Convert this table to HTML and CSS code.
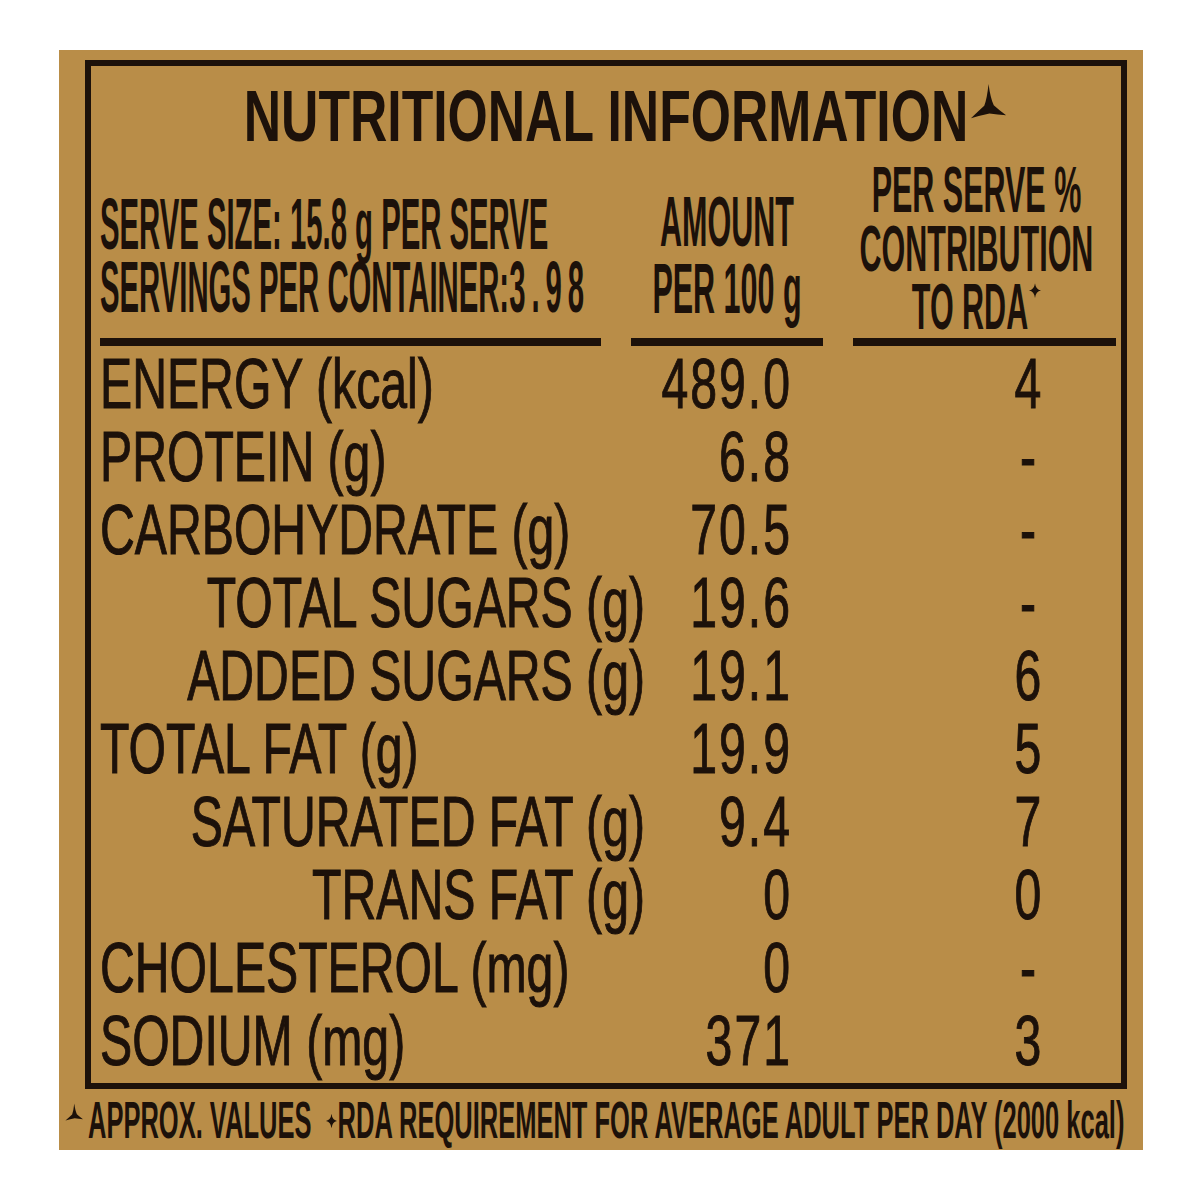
FILE: index.html
```html
<!DOCTYPE html>
<html lang="en">
<head>
<meta charset="utf-8">
<title>Nutritional Information</title>
<link rel="stylesheet" href="styles.css">
</head>
<body>
<div class="label">
  <div class="panel">
    <div class="title">
      <span class="title-text">NUTRITIONAL INFORMATION</span>
      <svg class="tristar" viewBox="0 0 40 40" aria-hidden="true"><path d="M19.5 1 Q21.5 16 25 23.5 Q31 29 38 34 Q29 33 20.5 32 Q11 34 1 37 Q9 29.5 15 24 Q18 16 19.5 1 Z"/></svg>
    </div>
    <div class="head">
      <div class="hcell c1"><div class="htext">SERVE SIZE: 15.8 g PER SERVE<br>SERVINGS PER CONTAINER:<span class="spaced">3.98</span></div></div>
      <div class="hcell c2"><div class="htext">AMOUNT<br>PER 100 g</div></div>
      <div class="hcell c3"><div class="htext">PER SERVE %<br>CONTRIBUTION<br>TO RDA<svg class="star" viewBox="0 0 12 12" preserveAspectRatio="none" aria-hidden="true"><path d="M6 0 Q6.8 5.2 12 6 Q6.8 6.8 6 12 Q5.2 6.8 0 6 Q5.2 5.2 6 0 Z"/></svg></div></div>
    </div>
    <div class="rows">
      <div class="row"><span class="name">ENERGY (kcal)</span><span class="val">489.0</span><span class="rda">4</span></div>
      <div class="row"><span class="name">PROTEIN (g)</span><span class="val">6.8</span><span class="rda">-</span></div>
      <div class="row"><span class="name">CARBOHYDRATE (g)</span><span class="val">70.5</span><span class="rda">-</span></div>
      <div class="row"><span class="name sub">TOTAL SUGARS (g)</span><span class="val">19.6</span><span class="rda">-</span></div>
      <div class="row"><span class="name sub">ADDED SUGARS (g)</span><span class="val">19.1</span><span class="rda">6</span></div>
      <div class="row"><span class="name">TOTAL FAT (g)</span><span class="val">19.9</span><span class="rda">5</span></div>
      <div class="row"><span class="name sub">SATURATED FAT (g)</span><span class="val">9.4</span><span class="rda">7</span></div>
      <div class="row"><span class="name sub">TRANS FAT (g)</span><span class="val">0</span><span class="rda">0</span></div>
      <div class="row"><span class="name">CHOLESTEROL (mg)</span><span class="val">0</span><span class="rda">-</span></div>
      <div class="row"><span class="name">SODIUM (mg)</span><span class="val">371</span><span class="rda">3</span></div>
    </div>
  </div>
  <div class="foot">
    <svg class="tristar-small" viewBox="0 0 40 40" aria-hidden="true"><path d="M19.5 1 Q21.5 16 25 23.5 Q31 29 38 34 Q29 33 20.5 32 Q11 34 1 37 Q9 29.5 15 24 Q18 16 19.5 1 Z"/></svg>
    <span class="foot-text">APPROX. VALUES&nbsp;&nbsp;<svg class="star-small" viewBox="0 0 12 12" preserveAspectRatio="none" aria-hidden="true"><path d="M6 0 Q6.8 5.2 12 6 Q6.8 6.8 6 12 Q5.2 6.8 0 6 Q5.2 5.2 6 0 Z"/></svg>RDA REQUIREMENT FOR AVERAGE ADULT PER DAY (2000 kcal)</span>
  </div>
</div>
</body>
</html>
```
FILE: styles.css
```css
html, body {
  margin: 0;
  padding: 0;
  background: #ffffff;
}

body {
  font-family: "Liberation Sans", Arial, sans-serif;
  color: #1c110a;
}

.label {
  box-sizing: border-box;
  margin: 50px 0 0 59px;
  width: 1084px;
  height: 1100px;
  padding: 10px 16px 0 26px;
  background: #b98d48;
}

.panel {
  box-sizing: border-box;
  width: 1042px;
  height: 1029px;
  border: 6px solid #1c110a;
}

/* Title */
.title {
  height: 100px;
  display: flex;
  justify-content: center;
  align-items: center;
  padding-left: 40px;
}

.title-text {
  font-size: 51.7px;
  line-height: 52px;
  font-weight: 700;
  transform: scaleY(1.4);
  white-space: nowrap;
}

.tristar {
  flex-shrink: 0;
  align-self: flex-start;
  margin-top: 17px;
  margin-left: 2px;
  width: 38px;
  height: 38px;
  fill: #1c110a;
}

/* Header */
.head {
  height: 180px;
  display: grid;
  grid-template-columns: 501px 192px 263px;
  column-gap: 30px;
  padding: 0 5px 0 9px;
}

.hcell {
  display: flex;
  flex-direction: column;
  justify-content: flex-end;
  border-bottom: 8px solid #1c110a;
}

.htext {
  font-weight: 700;
  white-space: nowrap;
  transform-origin: center bottom;
}

.c1 {
  text-align: left;
  padding-bottom: 16px;
}

.c1 .htext {
  font-size: 29.3px;
  line-height: 26.4px;
  transform: scaleY(2.45);
}

.spaced {
  letter-spacing: 6px;
}

.c2 {
  text-align: center;
  padding-bottom: 17px;
}

.c2 .htext {
  font-size: 30.5px;
  line-height: 28.7px;
  transform: scaleY(2.33);
}

.c3 {
  text-align: center;
  padding-bottom: 2px;
  padding-right: 16px;
}

.c3 .htext {
  font-size: 30.5px;
  line-height: 28.1px;
  transform: scaleY(2.1);
}

.star {
  width: 12px;
  height: 7px;
  vertical-align: 15px;
  margin-left: 1px;
  fill: #1c110a;
}

/* Rows */
.rows {
  padding: 0 5px 0 9px;
}

.row {
  height: 73px;
  display: grid;
  grid-template-columns: 548px 142px 1fr;
  align-items: center;
}

.name, .val, .rda {
  font-size: 48.2px;
  line-height: 48px;
  white-space: nowrap;
  transform: scaleY(1.45);
  -webkit-text-stroke: 0.7px #1c110a;
}

.name {
  text-align: left;
}

.name.sub {
  text-align: right;
  padding-right: 3px;
}

.val {
  text-align: right;
  letter-spacing: 2px;
  margin-right: -2px;
}

.rda {
  text-align: center;
  padding-left: 150px;
}

/* Footer */
.foot {
  height: 61px;
  display: flex;
  align-items: center;
  margin-left: -20px;
}

.tristar-small {
  flex-shrink: 0;
  width: 19px;
  height: 19px;
  margin-right: 4px;
  margin-top: -14px;
  fill: #1c110a;
}

.foot-text {
  font-size: 25.5px;
  line-height: 26px;
  font-weight: 700;
  white-space: nowrap;
  transform: scaleY(2.05);
}

.star-small {
  width: 11px;
  height: 7px;
  vertical-align: 5.5px;
  margin-right: 1px;
  fill: #1c110a;
}
```
